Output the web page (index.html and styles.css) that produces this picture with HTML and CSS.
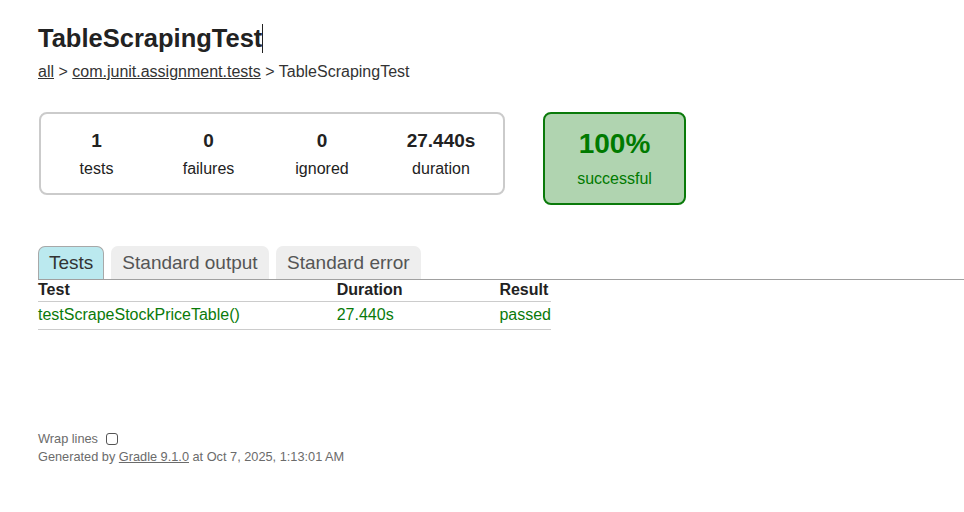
FILE: index.html
```
<!DOCTYPE html>
<html lang="en">
<head>
<meta charset="utf-8">
<title>Test results - TableScrapingTest</title>
<link rel="stylesheet" href="styles.css">
</head>
<body>
<div class="content">
  <h1 class="title">TableScrapingTest<span class="caret"></span></h1>
  <div class="breadcrumbs"><a href="#">all</a> &gt; <a href="#">com.junit.assignment.tests</a> &gt; TableScrapingTest</div>

  <div class="summary-row">
    <div class="summary">
      <div class="counter-box">
        <div class="counter">1</div>
        <div class="counter-label">tests</div>
      </div>
      <div class="counter-box">
        <div class="counter">0</div>
        <div class="counter-label">failures</div>
      </div>
      <div class="counter-box">
        <div class="counter">0</div>
        <div class="counter-label">ignored</div>
      </div>
      <div class="counter-box">
        <div class="counter">27.440s</div>
        <div class="counter-label">duration</div>
      </div>
    </div>
    <div class="rate success-box">
      <div class="rate-value">100%</div>
      <div class="rate-label">successful</div>
    </div>
  </div>

  <div class="tab-container">
    <ul class="tab-links">
      <li class="tab selected">Tests</li>
      <li class="tab">Standard output</li>
      <li class="tab">Standard error</li>
    </ul>
    <table class="results">
      <thead>
        <tr>
          <th class="col-test">Test</th>
          <th class="col-duration">Duration</th>
          <th class="col-result">Result</th>
        </tr>
      </thead>
      <tbody>
        <tr class="success">
          <td>testScrapeStockPriceTable()</td>
          <td>27.440s</td>
          <td>passed</td>
        </tr>
      </tbody>
    </table>
  </div>

  <div class="footer">
    <div class="wrap-line"><label for="wrap">Wrap lines</label><input id="wrap" class="wrap-toggle" type="checkbox"></div>
    <div class="generated">Generated by <a href="#">Gradle 9.1.0</a> at Oct 7, 2025, 1:13:01 AM</div>
  </div>
</div>
</body>
</html>
```
FILE: styles.css
```
* {
  box-sizing: border-box;
}

html, body {
  margin: 0;
  padding: 0;
  background: #ffffff;
}

body {
  font-family: "Liberation Sans", Arial, Helvetica, sans-serif;
  font-size: 16px;
  color: #333333;
}

a {
  color: inherit;
  text-decoration: underline;
}

.content {
  padding: 24px 0 0 38px;
}

.title {
  margin: 0;
  font-size: 25.5px;
  line-height: 29px;
  font-weight: bold;
  color: #222222;
}

.caret {
  display: inline-block;
  width: 1px;
  height: 29px;
  background: #222222;
  vertical-align: -6px;
}

.breadcrumbs {
  margin-top: 10px;
  font-size: 16px;
  line-height: 18px;
  color: #333333;
}

.summary-row {
  display: flex;
  align-items: flex-start;
  gap: 38px;
  margin-top: 31px;
  margin-left: 1px;
}

.summary {
  width: 466px;
  border: 2px solid #cbcbcb;
  border-radius: 8px;
  display: grid;
  grid-template-columns: 111px 113px 114px 124px;
  padding: 16px 0 15px;
}

.counter-box {
  display: flex;
  flex-direction: column;
  align-items: center;
  gap: 8px;
}

.counter {
  font-size: 19px;
  line-height: 22px;
  font-weight: bold;
  color: #222222;
}

.counter-label {
  font-size: 16px;
  line-height: 18px;
  color: #222222;
}

.rate {
  width: 143px;
  border: 2px solid #0a7a0a;
  border-radius: 8px;
  padding: 14px 0 15px;
  display: flex;
  flex-direction: column;
  align-items: center;
  gap: 10px;
}

.success-box {
  background: #b0d4b0;
  color: #007a00;
}

.rate-value {
  font-size: 28px;
  line-height: 32px;
  font-weight: bold;
}

.rate-label {
  font-size: 16px;
  line-height: 18px;
}

.tab-container {
  margin-top: 41px;
}

.tab-links {
  list-style: none;
  margin: 0;
  padding: 0;
  display: flex;
  gap: 6.5px;
  border-bottom: 1px solid #a0a0a0;
}

.tab {
  font-size: 19px;
  line-height: 22px;
  padding: 5px 10.5px;
  background: #eeeeee;
  color: #555555;
  border: 1px solid #eeeeee;
  border-bottom: none;
  border-radius: 7px 7px 0 0;
}

.tab.selected {
  padding: 5px 10px;
  background: #bbe9ef;
  border-color: #a8a8a8;
  color: #333333;
}

.results {
  border-collapse: collapse;
  width: 513px;
}

.results th,
.results td {
  text-align: left;
  font-size: 16px;
  line-height: 18px;
  padding: 0;
  white-space: nowrap;
}

.results th {
  font-weight: bold;
  color: #222222;
  padding: 1px 0 2px;
  border-bottom: 1px solid #cccccc;
}

.results td {
  padding: 4px 0 5px;
  border-bottom: 1px solid #cccccc;
}

.col-test {
  width: 299px;
}

.col-duration {
  width: 163px;
}

.col-result {
  width: 51px;
}

.success td {
  color: #0a7a0a;
}

.footer {
  margin-top: 100px;
  font-size: 12.75px;
  line-height: 18px;
  color: #6b6b6b;
}

.wrap-line {
  display: flex;
  align-items: center;
}

.wrap-toggle {
  appearance: none;
  -webkit-appearance: none;
  width: 12px;
  height: 12px;
  margin: 0 0 0 8px;
  border: 1px solid #555555;
  border-radius: 3px;
  background: #ffffff;
}

.generated a {
  color: #6b6b6b;
}
```
